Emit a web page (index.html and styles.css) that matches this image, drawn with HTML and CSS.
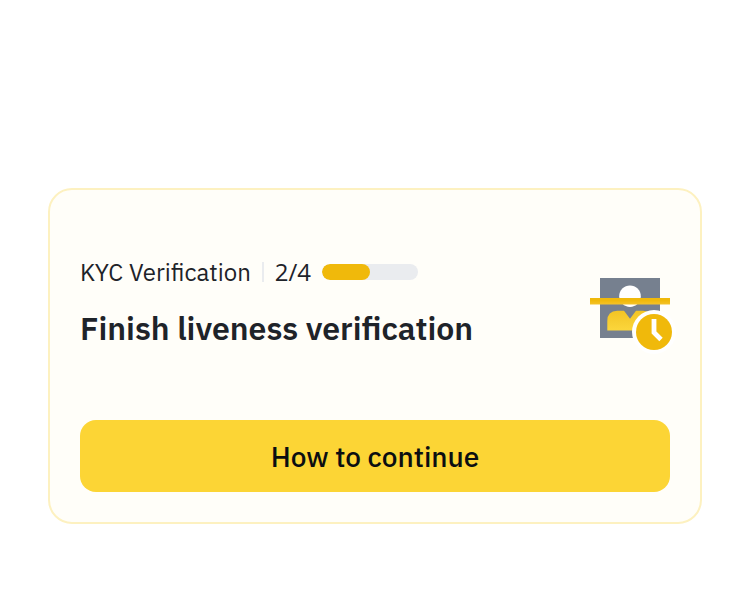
FILE: index.html
```html
<!DOCTYPE html>
<html lang="en">
<head>
<meta charset="utf-8">
<title>KYC Verification</title>
<link rel="stylesheet" href="styles.css">
</head>
<body>
<main class="card">
  <div class="summary">
    <div class="details">
      <div class="status">
        <span>KYC Verification</span>
        <span class="divider"></span>
        <span class="count">2/4</span>
        <div class="track"><div class="fill"></div></div>
      </div>
      <h1 class="title">Finish liveness verification</h1>
    </div>
    <svg class="icon" viewBox="0 0 84 80" aria-hidden="true">
      <defs>
        <linearGradient id="shirt" x1="0" y1="0" x2="0" y2="1"><stop offset="0" stop-color="#f3c424"/><stop offset="1" stop-color="#fbd63c"/></linearGradient>
        <linearGradient id="bar" x1="0" y1="0" x2="0" y2="1"><stop offset="0.4" stop-color="#f0b90b"/><stop offset="1" stop-color="#f4c32a"/></linearGradient>
      </defs>
      <path fill="#76808f" d="M10 6h60v60H10z"/>
      <circle cx="40" cy="24.2" r="10.8" fill="#fff"/>
      <path fill="url(#shirt)" d="M17.3 58.5V49q0-10 10-10.200H34l6 8 6-8h7q10 0 10 10v9.700z"/>
      <path fill="url(#bar)" d="M0 26h80v6.500H0z"/>
      <circle cx="64" cy="60" r="22" fill="#fff"/>
      <circle cx="64" cy="60" r="18" fill="#f0b90b"/>
      <path d="M64 47v13.500l7 7" fill="none" stroke="#fff" stroke-width="4.800"/>
    </svg>
  </div>
  <button class="action" type="button">How to continue</button>
</main>
</body>
</html>
```
FILE: styles.css
```css
* { box-sizing: border-box; }
body {
  margin: 0;
  padding: 188px 48px 0;
  background: #fff;
  color: #1e2329;
  font-family: "IBM Plex Sans", "Noto Sans", sans-serif;
}
.card {
  padding: 66px 30px 30px;
  border: 2px solid #fdf1c0;
  border-radius: 24px;
  background: #fffef9;
}
.summary {
  display: flex;
  align-items: flex-start;
  justify-content: space-between;
  margin-bottom: 68px;
}
.status {
  display: flex;
  align-items: center;
  gap: 11px;
  font-size: 24px;
  line-height: 32px;
}
.count { font-family: "Open Sans", sans-serif; }
.divider { width: 2px; height: 20px; background: #eaecef; }
.track {
  width: 96px;
  height: 16px;
  overflow: hidden;
  border-radius: 8px;
  background: #eaecef;
}
.fill { width: 50%; height: 100%; border-radius: 8px; background: #f0b90b; }
.title {
  margin: 18px 0 0;
  font-size: 32px;
  font-weight: 600;
  line-height: 44px;
}
.icon {
  width: 84px;
  height: 80px;
  margin: 16px -4px 0 0;
  overflow: visible;
}
.action {
  display: block;
  width: 100%;
  height: 72px;
  padding: 2px 0 0;
  border: 0;
  border-radius: 16px;
  background: #fcd535;
  color: #0b0e11;
  font: 500 28px/40px "IBM Plex Sans", "Noto Sans", sans-serif;
}
```
